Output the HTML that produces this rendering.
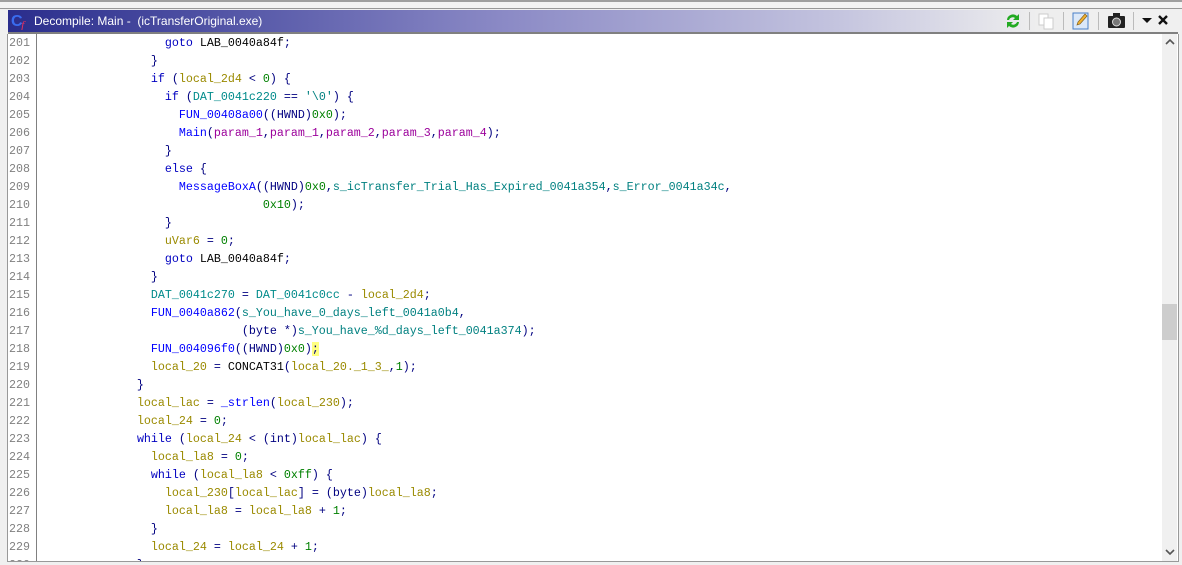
<!DOCTYPE html>
<html style="overflow:hidden;height:565px"><head><meta charset="utf-8"><style>
body{margin:0;width:1182px;height:565px;background:#f0f0f0;position:relative;overflow:hidden;font-family:"Liberation Sans",sans-serif}
.top1{position:absolute;left:0;top:0;width:1182px;height:2px;background:#a0a0a0}
.top2{position:absolute;left:0;top:2px;width:1182px;height:6px;background:#f4f4f4;border-bottom:1px solid #999}
.title{position:absolute;left:8px;top:10px;width:1170px;height:22px;background:linear-gradient(to right,#2a2d8c 0%,#5658a8 20%,#8a89c5 42%,#c2c2de 70%,#eeeeee 88%,#f0f0f0 100%);border-bottom:2px solid #808080}
.title .t{position:absolute;left:26px;top:4px;color:#fff;font-size:12px}
.panel{position:absolute;left:7px;top:34px;width:1170px;height:527px;background:#fff;border-left:1px solid #999;border-right:1px solid #999;border-bottom:1px solid #999;overflow:hidden}
.gut{position:absolute;left:0;top:0;width:28px;height:528px;border-right:1px solid #808080;background:#fff}
.code{position:absolute;left:0;top:0;font-family:"Liberation Mono",monospace;font-size:11.67px;line-height:18px;white-space:pre;color:#000080}
.ln{color:#808080;position:absolute;left:1px}
.tx{position:absolute;left:31px}
.k{color:#0000c0}.f{color:#0000ff}.v{color:#9a8a00}.d{color:#008b8b}.n{color:#008000}.p{color:#9b009b}.s{color:#008080}.b{color:#000}
.sb{position:absolute;left:1154px;top:0;width:15px;height:528px;background:#f0f0f0}
.thumb{position:absolute;left:0;top:270px;width:15px;height:36px;background:#cdcdcd}
</style></head><body>
<div class="top1"></div><div class="top2"></div>
<div class="title">
<svg style="position:absolute;left:3px;top:2px" width="20" height="18"><text x="0" y="14" font-family="Liberation Sans" font-weight="bold" font-size="16" fill="#3a6cf0">C</text><text x="10" y="17" font-family="Liberation Serif" font-style="italic" font-size="12" fill="#e03060">f</text></svg>
<span class="t">Decompile: Main -&nbsp; (icTransferOriginal.exe)</span>
<svg style="position:absolute;left:995px;top:1px" width="20" height="20"><path d="M4 9a6 6 0 0 1 10-4l2-2v6h-6l2-2a4 4 0 0 0-6 2z" fill="#22aa22"/><path d="M16 11a6 6 0 0 1-10 4l-2 2v-6h6l-2 2a4 4 0 0 0 6-2z" fill="#22aa22"/></svg>
<div style="position:absolute;left:1021px;top:2px;width:1px;height:18px;background:#bbb"></div>
<svg style="position:absolute;left:1029px;top:2px" width="18" height="18"><rect x="2" y="2" width="9" height="11" fill="#fff" stroke="#ccc"/><rect x="7" y="6" width="9" height="11" fill="#fff" stroke="#ccc"/></svg>
<div style="position:absolute;left:1055px;top:2px;width:1px;height:18px;background:#bbb"></div>
<svg style="position:absolute;left:1064px;top:1px" width="18" height="19"><rect x="1" y="2" width="15" height="16" fill="#dbe8f8" stroke="#4a80c8"/><path d="M5 14l1-3 7-8 2 2-7 8z" fill="#f0b030" stroke="#806020" stroke-width=".7"/></svg>
<div style="position:absolute;left:1090px;top:2px;width:1px;height:18px;background:#bbb"></div>
<svg style="position:absolute;left:1099px;top:1px" width="20" height="19"><rect x="1" y="5" width="17" height="12" rx="1" fill="#222"/><rect x="6" y="2" width="7" height="4" fill="#222"/><circle cx="9.5" cy="11" r="4" fill="#777" stroke="#ddd"/></svg>
<div style="position:absolute;left:1125px;top:2px;width:1px;height:18px;background:#bbb"></div>
<svg style="position:absolute;left:1133px;top:6px" width="12" height="8"><path d="M1 2h10l-5 5z" fill="#111"/></svg>
<svg style="position:absolute;left:1149px;top:4px" width="12" height="12"><path d="M2 2l8 8M10 2l-8 8" stroke="#111" stroke-width="2.4"/></svg>
</div>
<div class="panel">
<div class="gut"></div>
<div class="code">
<span class="ln" style="top:0">201</span><span class="tx" style="top:0">                  <span class="k">goto</span> <span class="b">LAB_0040a84f</span>;</span>
<span class="ln" style="top:18px">202</span><span class="tx" style="top:18px">                }</span>
<span class="ln" style="top:36px">203</span><span class="tx" style="top:36px">                <span class="k">if</span> (<span class="v">local_2d4</span> &lt; <span class="n">0</span>) {</span>
<span class="ln" style="top:54px">204</span><span class="tx" style="top:54px">                  <span class="k">if</span> (<span class="d">DAT_0041c220</span> == <span class="s">'\0'</span>) {</span>
<span class="ln" style="top:72px">205</span><span class="tx" style="top:72px">                    <span class="f">FUN_00408a00</span>((HWND)<span class="n">0x0</span>);</span>
<span class="ln" style="top:90px">206</span><span class="tx" style="top:90px">                    <span class="f">Main</span>(<span class="p">param_1</span>,<span class="p">param_1</span>,<span class="p">param_2</span>,<span class="p">param_3</span>,<span class="p">param_4</span>);</span>
<span class="ln" style="top:108px">207</span><span class="tx" style="top:108px">                  }</span>
<span class="ln" style="top:126px">208</span><span class="tx" style="top:126px">                  <span class="k">else</span> {</span>
<span class="ln" style="top:144px">209</span><span class="tx" style="top:144px">                    <span class="f">MessageBoxA</span>((HWND)<span class="n">0x0</span>,<span class="s">s_icTransfer_Trial_Has_Expired_0041a354</span>,<span class="s">s_Error_0041a34c</span>,</span>
<span class="ln" style="top:162px">210</span><span class="tx" style="top:162px">                                <span class="n">0x10</span>);</span>
<span class="ln" style="top:180px">211</span><span class="tx" style="top:180px">                  }</span>
<span class="ln" style="top:198px">212</span><span class="tx" style="top:198px">                  <span class="v">uVar6</span> = <span class="n">0</span>;</span>
<span class="ln" style="top:216px">213</span><span class="tx" style="top:216px">                  <span class="k">goto</span> <span class="b">LAB_0040a84f</span>;</span>
<span class="ln" style="top:234px">214</span><span class="tx" style="top:234px">                }</span>
<span class="ln" style="top:252px">215</span><span class="tx" style="top:252px">                <span class="d">DAT_0041c270</span> = <span class="d">DAT_0041c0cc</span> - <span class="v">local_2d4</span>;</span>
<span class="ln" style="top:270px">216</span><span class="tx" style="top:270px">                <span class="f">FUN_0040a862</span>(<span class="s">s_You_have_0_days_left_0041a0b4</span>,</span>
<span class="ln" style="top:288px">217</span><span class="tx" style="top:288px">                             (byte *)<span class="s">s_You_have_%d_days_left_0041a374</span>);</span>
<span class="ln" style="top:306px">218</span><span class="tx" style="top:306px">                <span class="f">FUN_004096f0</span>((HWND)<span class="n">0x0</span>)<span style="background:#ffff80">;</span></span>
<span class="ln" style="top:324px">219</span><span class="tx" style="top:324px">                <span class="v">local_20</span> = <span class="b">CONCAT31</span>(<span class="v">local_20._1_3_</span>,<span class="n">1</span>);</span>
<span class="ln" style="top:342px">220</span><span class="tx" style="top:342px">              }</span>
<span class="ln" style="top:360px">221</span><span class="tx" style="top:360px">              <span class="v">local_lac</span> = <span class="f">_strlen</span>(<span class="v">local_230</span>);</span>
<span class="ln" style="top:378px">222</span><span class="tx" style="top:378px">              <span class="v">local_24</span> = <span class="n">0</span>;</span>
<span class="ln" style="top:396px">223</span><span class="tx" style="top:396px">              <span class="k">while</span> (<span class="v">local_24</span> &lt; (int)<span class="v">local_lac</span>) {</span>
<span class="ln" style="top:414px">224</span><span class="tx" style="top:414px">                <span class="v">local_la8</span> = <span class="n">0</span>;</span>
<span class="ln" style="top:432px">225</span><span class="tx" style="top:432px">                <span class="k">while</span> (<span class="v">local_la8</span> &lt; <span class="n">0xff</span>) {</span>
<span class="ln" style="top:450px">226</span><span class="tx" style="top:450px">                  <span class="v">local_230</span>[<span class="v">local_lac</span>] = (byte)<span class="v">local_la8</span>;</span>
<span class="ln" style="top:468px">227</span><span class="tx" style="top:468px">                  <span class="v">local_la8</span> = <span class="v">local_la8</span> + <span class="n">1</span>;</span>
<span class="ln" style="top:486px">228</span><span class="tx" style="top:486px">                }</span>
<span class="ln" style="top:504px">229</span><span class="tx" style="top:504px">                <span class="v">local_24</span> = <span class="v">local_24</span> + <span class="n">1</span>;</span>
<span class="ln" style="top:522px">230</span><span class="tx" style="top:522px">              }</span>
</div>
<div class="sb"><svg style="position:absolute;left:3px;top:4px" width="10" height="8"><path d="M1 6l4-4 4 4" stroke="#555" stroke-width="1.6" fill="none"/></svg><div class="thumb"></div><svg style="position:absolute;left:3px;top:514px" width="10" height="8"><path d="M1 2l4 4 4-4" stroke="#555" stroke-width="1.6" fill="none"/></svg></div>
</div>
</body></html>
